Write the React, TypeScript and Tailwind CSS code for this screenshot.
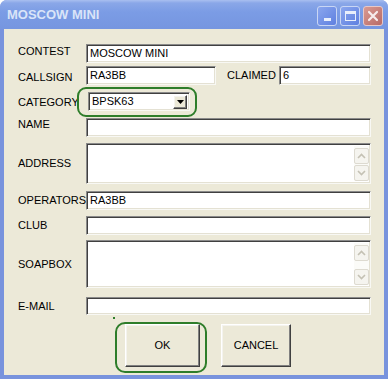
import React from "react";

const sunken =
  "bg-white border border-t-[#8A8A8A] border-l-[#8A8A8A] border-b-[#F8F8F4] border-r-[#F8F8F4] shadow-[inset_1px_1px_0_#404040,inset_-1px_-1px_0_#E4E1D3]";
const raised =
  "bg-[#ECE9D8] border border-t-[#FFFFFF] border-l-[#FFFFFF] border-b-[#404040] border-r-[#404040] shadow-[inset_-1px_-1px_0_#808080,inset_1px_1px_0_#F4F3EE]";

function Chevron({ up }: { up?: boolean }) {
  return (
    <svg width="9" height="6" viewBox="0 0 9 6">
      <path
        d={up ? "M1 5 L4.5 1.5 L8 5" : "M1 1 L4.5 4.5 L8 1"}
        fill="none"
        stroke="#C4C1B4"
        strokeWidth="1.6"
      />
    </svg>
  );
}

function ScrollBtn({ up }: { up?: boolean }) {
  return (
    <div className="w-[15px] h-[16px] flex items-center justify-center rounded-[2px] border border-[#DDDAD0] bg-[#F5F4EF]">
      <Chevron up={up} />
    </div>
  );
}

function TextArea({ h }: { h: string }) {
  return (
    <div className={`flex-1 ${h} ${sunken} flex justify-end p-[2px] pr-[1px]`}>
      <div className="flex flex-col justify-between bg-[#FBFBF8] pt-[2px] pb-[0px]">
        <ScrollBtn up />
        <ScrollBtn />
      </div>
    </div>
  );
}

function Input({ value, cls }: { value?: string; cls?: string }) {
  return (
    <div
      className={`${cls ?? "flex-1"} h-[19px] ${sunken} flex items-center pl-[3px] text-[11px] text-black leading-none`}
    >
      {value}
    </div>
  );
}

function Label({ text, off }: { text: string; off?: string }) {
  return (
    <div className={`w-[68px] shrink-0 text-[11px] text-black leading-none whitespace-nowrap ${off ?? ""}`}>
      {text}
    </div>
  );
}

export default function App() {
  return (
    <div className="relative w-[388px] h-[379px] flex flex-col bg-[#7893DD] rounded-t-[7px] overflow-hidden font-['Liberation_Sans',Arial,sans-serif]">
      {/* Title bar */}
      <div className="h-[29px] shrink-0 flex items-center pl-[7px] pr-[5px] bg-[linear-gradient(to_bottom,#A9BFF0_0px,#8AA7E8_3px,#7B9CE5_12px,#7696E0_28px)]">
        <span className="text-[13px] font-bold text-[#D9E4F8] leading-none">
          MOSCOW MINI
        </span>
        <div className="ml-auto flex gap-[3px] mt-[2px]">
          <div className="w-[20px] h-[20px] rounded-[3px] border border-[#C9D6F4] bg-[linear-gradient(135deg,#8AA6EE,#5F80E0)] flex items-end justify-center pb-[4px]">
            <div className="w-[7px] h-[3px] bg-[#E8EEFB]" />
          </div>
          <div className="w-[20px] h-[20px] rounded-[3px] border border-[#C9D6F4] bg-[linear-gradient(135deg,#8AA6EE,#5F80E0)] flex items-center justify-center">
            <div className="w-[11px] h-[10px] border border-[#E8EEFB] border-t-[3px]" />
          </div>
          <div className="w-[20px] h-[20px] rounded-[3px] border border-[#E6C8C8] bg-[linear-gradient(135deg,#D99A92,#B86A66)] flex items-center justify-center">
            <svg width="12" height="12" viewBox="0 0 12 12">
              <path d="M2 2 L10 10 M10 2 L2 10" stroke="#F6ECEC" strokeWidth="2.2" strokeLinecap="round" />
            </svg>
          </div>
        </div>
      </div>

      {/* Body */}
      <div className="flex-1 mx-[4px] mb-[4px] bg-[#ECE9D8] flex flex-col pt-[15px] pl-[14px] pr-[13px]">
        <div className="flex items-center">
          <Label text="CONTEST" off="-mt-[4px]" />
          <Input value="MOSCOW MINI" />
        </div>
        <div className="flex items-center mt-[3px]">
          <Label text="CALLSIGN" off="mt-[3px]" />
          <Input value="RA3BB" cls="w-[130px]" />
          <div className="ml-[11px] w-[52px] text-[11px] text-black leading-none">CLAIMED</div>
          <Input value="6" />
        </div>
        <div className="flex items-center mt-[7px]">
          <Label text="CATEGORY" off="mt-[2px]" />
          <div className={`ml-[2px] w-[102px] h-[19px] ${sunken} flex items-center pl-[3px] pr-[2px] text-[11px] text-black leading-none`}>
            <span className="flex-1">BPSK63</span>
            <div className={`w-[14px] h-[14px] ${raised} flex items-center justify-center`}>
              <svg width="7" height="4" viewBox="0 0 7 4">
                <path d="M0 0 H7 L3.5 4 Z" fill="#000" />
              </svg>
            </div>
          </div>
        </div>
        <div className="flex items-center mt-[7px]">
          <Label text="NAME" off="-mt-[6px]" />
          <Input />
        </div>
        <div className="flex items-center mt-[6px]">
          <Label text="ADDRESS" />
          <TextArea h="h-[41px]" />
        </div>
        <div className="flex items-center mt-[7px]">
          <Label text="OPERATORS" />
          <Input value="RA3BB" />
        </div>
        <div className="flex items-center mt-[6px]">
          <Label text="CLUB" />
          <Input />
        </div>
        <div className="flex items-center mt-[5px]">
          <Label text="SOAPBOX" />
          <TextArea h="h-[48px]" />
        </div>
        <div className="flex items-center mt-[9px]">
          <Label text="E-MAIL" />
          <div className={`flex-1 h-[18px] ${sunken}`} />
        </div>
        <div className="flex mt-[9px] pl-[107px]">
          <div className={`w-[75px] h-[43px] ${raised} flex items-center justify-center text-[11px] text-black leading-none`}>
            OK
          </div>
          <div className={`ml-[21px] w-[70px] h-[43px] ${raised} flex items-center justify-center text-[11px] text-black leading-none`}>
            CANCEL
          </div>
        </div>
      </div>

      {/* Green highlight annotations */}
      <div className="absolute left-[77px] top-[87px] w-[120px] h-[30px] rounded-[9px] border-2 border-[#2E7D2A] pointer-events-none" />
      <div className="absolute left-[115px] top-[322px] w-[92px] h-[51px] rounded-[10px] border-2 border-[#2E7D2A] pointer-events-none" />
      <div className="absolute left-[113px] top-[317px] w-[2px] h-[2px] bg-[#2E7D2A]" />
    </div>
  );
}
